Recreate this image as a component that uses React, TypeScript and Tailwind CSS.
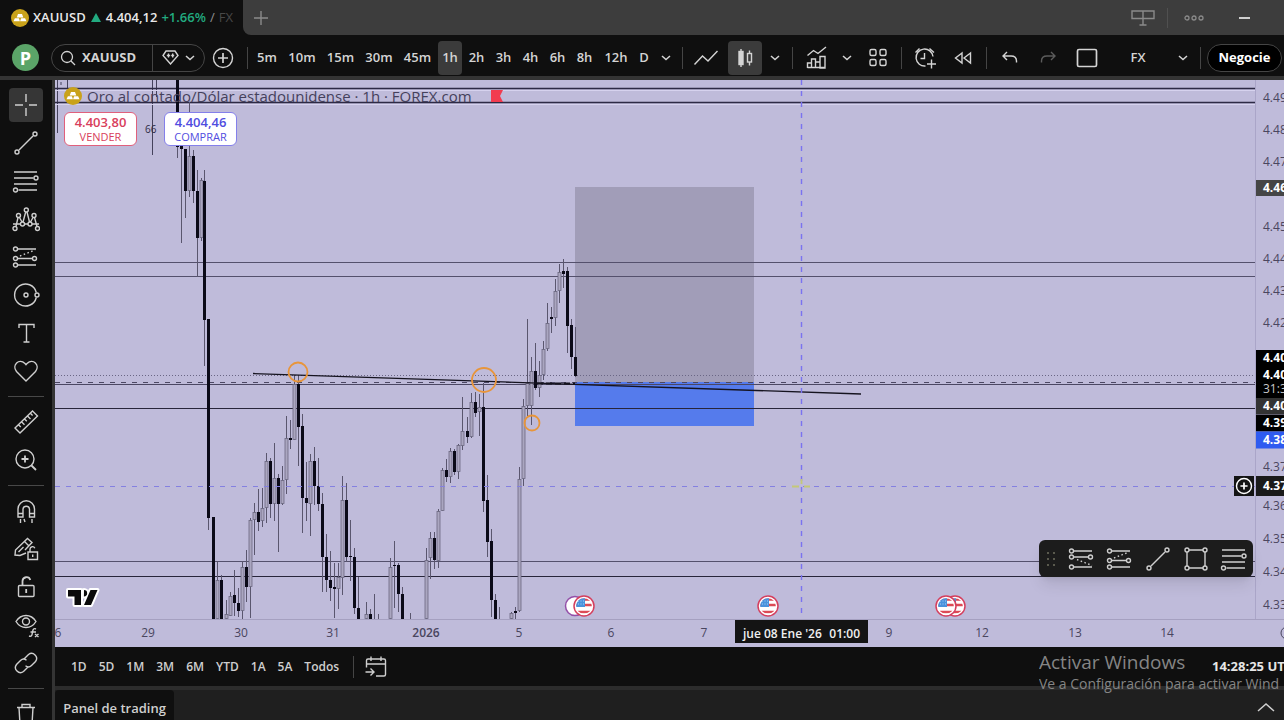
import React from 'react';
import clsx from 'clsx';

type Candle = [x: number, high: number, top: number, bottom: number, low: number, filled: 0 | 1];

const candles: Candle[] = [
  [177, 80, 80, 147, 158, 1],
  [181, 140, 146, 149, 243, 1],
  [185, 149, 149, 191, 218, 1],
  [189, 102, 156, 191, 197, 0],
  [193, 150, 156, 191, 203, 1],
  [197, 170, 191, 238, 277, 1],
  [201, 178, 180, 238, 241, 0],
  [204, 170, 181, 320, 366, 1],
  [208, 319, 319, 518, 530, 1],
  [213, 517, 517, 619, 619, 1],
  [217, 562, 580, 619, 619, 0],
  [221, 575, 580, 619, 619, 1],
  [226, 600, 614, 619, 619, 0],
  [230, 592, 596, 616, 616, 0],
  [234, 570, 595, 603, 616, 1],
  [238, 588, 603, 611, 617, 1],
  [242, 561, 567, 611, 619, 0],
  [246, 550, 567, 587, 602, 1],
  [250, 518, 520, 587, 618, 0],
  [254, 503, 512, 520, 555, 0],
  [258, 489, 512, 522, 531, 1],
  [262, 488, 508, 521, 527, 0],
  [266, 453, 461, 508, 523, 0],
  [270, 458, 461, 504, 518, 1],
  [274, 443, 478, 504, 521, 0],
  [278, 474, 478, 504, 552, 1],
  [282, 466, 480, 504, 505, 0],
  [286, 416, 438, 480, 494, 0],
  [290, 420, 438, 440, 449, 1],
  [294, 375, 384, 440, 440, 0],
  [298, 375, 384, 427, 466, 1],
  [302, 414, 426, 498, 533, 1],
  [306, 462, 498, 503, 521, 1],
  [310, 454, 461, 504, 536, 0],
  [314, 447, 461, 486, 505, 1],
  [318, 458, 486, 504, 511, 1],
  [322, 493, 504, 557, 592, 1],
  [326, 534, 557, 580, 592, 1],
  [330, 551, 580, 588, 601, 1],
  [334, 563, 587, 589, 618, 1],
  [338, 563, 577, 589, 609, 0],
  [342, 476, 500, 578, 595, 0],
  [346, 483, 500, 557, 562, 1],
  [350, 520, 556, 557, 581, 1],
  [354, 548, 557, 608, 614, 1],
  [358, 577, 608, 619, 619, 1],
  [366, 602, 614, 619, 619, 0],
  [370, 609, 614, 619, 619, 1],
  [374, 594, 619, 619, 619, 1],
  [378, 614, 619, 619, 619, 1],
  [390, 558, 567, 619, 619, 0],
  [394, 541, 565, 566, 608, 1],
  [398, 563, 565, 594, 612, 1],
  [402, 587, 594, 619, 619, 1],
  [410, 613, 619, 619, 619, 1],
  [426, 548, 560, 619, 619, 0],
  [430, 532, 538, 558, 579, 0],
  [434, 532, 538, 560, 569, 1],
  [438, 509, 511, 561, 568, 0],
  [442, 468, 470, 511, 511, 0],
  [446, 459, 470, 477, 482, 1],
  [450, 448, 451, 477, 483, 0],
  [454, 449, 451, 472, 475, 1],
  [458, 444, 445, 472, 479, 0],
  [462, 397, 431, 446, 450, 0],
  [467, 417, 431, 437, 443, 1],
  [471, 393, 402, 437, 438, 0],
  [475, 392, 402, 413, 417, 1],
  [479, 394, 407, 412, 436, 0],
  [483, 383, 407, 501, 512, 1],
  [487, 475, 500, 542, 557, 1],
  [491, 529, 541, 600, 617, 1],
  [495, 594, 600, 619, 619, 1],
  [499, 607, 619, 619, 619, 1],
  [511, 612, 613, 619, 619, 0],
  [515, 607, 611, 613, 619, 1],
  [519, 467, 479, 611, 612, 0],
  [523, 399, 406, 479, 486, 0],
  [527, 319, 383, 406, 416, 0],
  [531, 357, 371, 406, 425, 0],
  [535, 343, 371, 388, 390, 1],
  [539, 361, 375, 388, 397, 0],
  [543, 341, 349, 375, 380, 0],
  [547, 303, 323, 349, 351, 0],
  [551, 307, 317, 319, 333, 1],
  [555, 279, 291, 318, 326, 0],
  [559, 264, 272, 291, 303, 0],
  [563, 259, 271, 274, 288, 1],
  [567, 267, 271, 326, 353, 1],
  [571, 319, 325, 357, 369, 1],
  [575, 327, 357, 376, 377, 1],
];

// y position and colour of every horizontal level
const levels = [
  { y: 88, color: '#2d2a45', width: 1.4 },
  { y: 102, color: '#2d2a45', width: 1.4 },
  { y: 262, color: '#54506c', width: 1 },
  { y: 276, color: '#54506c', width: 1 },
  { y: 384, color: '#4b4763', width: 1 },
  { y: 408, color: '#28253a', width: 1 },
  { y: 561, color: '#54506c', width: 1 },
  { y: 576, color: '#28253a', width: 1.2 },
];

const prices = [
  { y: 97, label: '4.49' },
  { y: 129, label: '4.48' },
  { y: 161, label: '4.47' },
  { y: 226, label: '4.45' },
  { y: 258, label: '4.44' },
  { y: 290, label: '4.43' },
  { y: 322, label: '4.42' },
  { y: 466, label: '4.37' },
  { y: 505, label: '4.36' },
  { y: 538, label: '4.35' },
  { y: 571, label: '4.34' },
  { y: 604, label: '4.33' },
];

const priceTags = [
  { y: 188, height: 16, bg: '#454545', label: '4.46' },
  { y: 358, height: 16, bg: '#000000', label: '4.40' },
  { y: 382, height: 32, bg: '#000000', label: '4.40', sub: '31:3' },
  { y: 406, height: 16, bg: '#333333', label: '4.40' },
  { y: 423, height: 17, bg: '#000000', label: '4.39' },
  { y: 440, height: 17, bg: '#2f5bf0', label: '4.38' },
  { y: 486, height: 20, bg: '#1a1a1a', label: '4.37' },
];

const days = [
  { x: 58, label: '6' },
  { x: 148, label: '29' },
  { x: 241, label: '30' },
  { x: 333, label: '31' },
  { x: 426, label: '2026', strong: true },
  { x: 519, label: '5' },
  { x: 611, label: '6' },
  { x: 704, label: '7' },
  { x: 889, label: '9' },
  { x: 982, label: '12' },
  { x: 1075, label: '13' },
  { x: 1167, label: '14' },
];

const intervals = [
  { label: '5m', width: 'w-8' },
  { label: '10m', width: 'w-[38px]' },
  { label: '15m', width: 'w-[39px]' },
  { label: '30m', width: 'w-[38px]' },
  { label: '45m', width: 'w-[39px]' },
  { label: '1h', width: 'w-6', active: true },
  { label: '2h', width: 'w-[27px]' },
  { label: '3h', width: 'w-[27px]' },
  { label: '4h', width: 'w-[27px]' },
  { label: '6h', width: 'w-[27px]' },
  { label: '8h', width: 'w-[27px]' },
  { label: '12h', width: 'w-9' },
  { label: 'D', width: 'w-5' },
];

const ranges = ['1D', '5D', '1M', '3M', '6M', 'YTD', '1A', '5A', 'Todos'];

interface IconProps {
  children: React.ReactNode;
  size?: number;
  stroke?: number;
}

const Icon: React.FC<IconProps> = ({ children, size = 28, stroke = 1.4 }) => (
  <svg
    width={size}
    height={size}
    viewBox="0 0 28 28"
    fill="none"
    stroke="currentColor"
    strokeWidth={stroke}
    className="shrink-0"
    aria-hidden="true"
  >
    {children}
  </svg>
);

const Chevron = () => (
  <svg width="10" height="10" viewBox="0 0 10 10" fill="none" stroke="currentColor" strokeWidth="1.5" aria-hidden="true">
    <path d="M1 3l4 3.6L9 3" />
  </svg>
);

const TrendIcon = () => (
  <Icon>
    <path d="M7 21L21 7" />
    <circle cx="5" cy="23" r="2" />
    <circle cx="23" cy="5" r="2" />
  </Icon>
);

const FibIcon = () => (
  <Icon>
    <path d="M2 5h23M2 11h19.5M2 17h23M6.500 23H25" />
    <circle cx="24" cy="11" r="2" />
    <circle cx="3.500" cy="23" r="2" />
  </Icon>
);

const ForecastIcon = () => (
  <Icon>
    <path d="M5.500 6H24M6 15.500h14M5.500 22H24" />
    <circle cx="3.500" cy="6" r="2" />
    <circle cx="3.500" cy="15.500" r="2" />
    <circle cx="22.500" cy="15.500" r="2" />
    <circle cx="3.500" cy="22" r="2" />
    <path d="M8 13l15-6" strokeDasharray="1.500 2.500" />
  </Icon>
);

const ShortIcon = () => (
  <Icon>
    <path d="M5.500 6H24M6 12h14M5.500 22H24" />
    <circle cx="3.500" cy="6" r="2" />
    <circle cx="3.500" cy="12" r="2" />
    <circle cx="22.500" cy="12" r="2" />
    <circle cx="3.500" cy="22" r="2" />
    <path d="M9 14.500l15 6" strokeDasharray="1.500 2.500" />
  </Icon>
);

const RectIcon = () => (
  <Icon>
    <path d="M7 5h14M7 23h14M5 7v14M23 7v14" />
    <circle cx="5" cy="5" r="2" />
    <circle cx="23" cy="5" r="2" />
    <circle cx="5" cy="23" r="2" />
    <circle cx="23" cy="23" r="2" />
  </Icon>
);

const GoldLogo = () => (
  <svg width="18" height="18" viewBox="0 0 18 18" className="shrink-0" aria-hidden="true">
    <circle cx="9" cy="9" r="9" fill="#c9a21a" />
    <path d="M7 5h4l1.300 3.500H5.700zM3.900 9.300h4l1 3H2.500zM10.100 9.300h4l1.400 3H9.100z" fill="#fff" />
  </svg>
);

const drawingTools = [
  [
    {
      name: 'Cruz',
      active: true,
      icon: (
        <Icon>
          <path d="M14 3v8M14 17v8M3 14h8M17 14h8" />
        </Icon>
      ),
    },
    { name: 'Línea de tendencia', icon: <TrendIcon /> },
    { name: 'Retroceso de Fibonacci', icon: <FibIcon /> },
    {
      name: 'Patrón XABCD',
      icon: (
        <Icon>
          <path d="M1 19h7.500M12.500 19H16M20 19h7M4 21.500L6 12.500M7.500 12.500l2.500 4.500M11 17l2.700-10M15 7l2.500 10M18.500 17l2.500-4.500M22.500 12.500l2.500 9" />
          <circle cx="14.300" cy="5" r="2" />
          <circle cx="6.500" cy="10.500" r="2" />
          <circle cx="22" cy="10.500" r="2" />
          <circle cx="10.500" cy="19" r="2" />
          <circle cx="18" cy="19" r="2" />
          <circle cx="3" cy="23.500" r="2" />
          <circle cx="25.500" cy="23.500" r="2" />
        </Icon>
      ),
    },
    { name: 'Previsión', icon: <ForecastIcon /> },
    {
      name: 'Formas',
      icon: (
        <Icon>
          <path d="M24.300 11.500a11 11 0 1 0 0 5" />
          <circle cx="14" cy="14" r="2" />
          <circle cx="25" cy="14" r="2" />
        </Icon>
      ),
    },
    {
      name: 'Texto',
      icon: (
        <Icon>
          <path d="M7 9V5.500h15V9M14.500 5.500V23M11.500 23h6" />
        </Icon>
      ),
    },
    {
      name: 'Iconos',
      icon: (
        <Icon>
          <path d="M14 24L4.500 14.500C-.5 8 7 1 13 6.500l1 1.200 1-1.200C21 1 28.500 8 23.500 14.500z" />
        </Icon>
      ),
    },
  ],
  [
    {
      name: 'Medir',
      icon: (
        <Icon>
          <path d="M3 20L20.500 3 25.500 8 8 25zM6.500 16.800l2.300 2.300M9.500 13.800l3 3M12.500 10.900l2.300 2.300M15.500 8l3 3M18.400 5.200l2.200 2.200" />
        </Icon>
      ),
    },
    {
      name: 'Acercar',
      icon: (
        <Icon>
          <circle cx="13" cy="13" r="9" />
          <path d="M13 9.500v7M9.500 13h7M19.500 19.500l4.500 4.500" strokeWidth="1.800" />
        </Icon>
      ),
    },
  ],
  [
    {
      name: 'Imán',
      icon: (
        <Icon>
          <path d="M6 20v-8a8 8 0 0 1 16.500 0v8h-5v-8a3.300 3.300 0 0 0-6.500 0v8zM6 16.500h5M17.500 16.500h5M8.500 22v4M20 22v4M12 22l1 3" />
        </Icon>
      ),
    },
    {
      name: 'Modo de dibujo',
      icon: (
        <Icon>
          <path d="M14 18l-6 2.500-5-.500.500-5L15.500 3.500l4.500 4-7 7.500M12.500 6.500l4 4M6.500 17l5-5" />
          <path d="M16 17h9.500v7.500H16zM18 16.500v-2.500a2.500 2.500 0 0 1 4.800-.800M20.700 19.500v2.500" />
        </Icon>
      ),
    },
    {
      name: 'Bloquear dibujos',
      icon: (
        <Icon>
          <rect x="6.500" y="12.500" width="15.500" height="11" rx="1" />
          <path d="M10.500 12V8a4 4 0 0 1 7.800-1M14.200 16v4" strokeWidth="1.800" />
        </Icon>
      ),
    },
    {
      name: 'Ocultar dibujos',
      icon: (
        <Icon>
          <path d="M4 10.500C9 2.500 19 2.500 24 10.500 19 18.500 9 18.500 4 10.500z" />
          <circle cx="14" cy="10.500" r="3.500" />
          <path d="M17 25c3 1 3-1 3.500-4 .4-3 1.500-4 3.500-3M18.500 21H24M23 23l3.500 3M26.500 23L23 26" />
        </Icon>
      ),
    },
    {
      name: 'Vincular',
      icon: (
        <Icon>
          <path d="M12 10l4.500-4.500a5 5 0 0 1 7 7L19.500 16.500a4.500 4.500 0 0 1-6 .3M16 18l-4.500 4.500a5 5 0 0 1-7-7L8.500 11.500a4.500 4.500 0 0 1 6-.3" />
        </Icon>
      ),
    },
  ],
  [
    {
      name: 'Eliminar',
      icon: (
        <Icon>
          <path d="M5 7.500h18M10 7V4.500h8V7M7 7.500l1 17h12l1-17" />
        </Icon>
      ),
    },
  ],
];

const Divider = () => <div className="h-[22px] w-px shrink-0 bg-[#454545]" />;

interface IconButtonProps {
  label: string;
  className?: string;
  children: React.ReactNode;
}

const IconButton: React.FC<IconButtonProps> = ({ label, className, children }) => (
  <button type="button" aria-label={label} className={clsx('flex h-[34px] shrink-0 items-center justify-center', className)}>
    {children}
  </button>
);

const WindowBar = () => (
  <header className="flex h-[35px] shrink-0 items-stretch bg-[#0f0f0f]">
    <div className="flex w-[243px] shrink-0 items-center gap-1 overflow-hidden pl-[11px] text-[13px] font-semibold whitespace-nowrap text-[#e8e8e8]">
      <GoldLogo />
      <span>XAUUSD</span>
      <svg width="10" height="9" viewBox="0 0 10 9" className="mx-px shrink-0" aria-hidden="true">
        <path d="M5 0l5 9H0z" fill="#22ab80" />
      </svg>
      <span>4.404,12</span>
      <span className="text-[#22ab80]">+1.66%</span>
      <span className="font-normal text-[#909090]">/</span>
      <span className="font-normal text-[#484848]">FX</span>
    </div>
    <div className="flex flex-1 items-center rounded-bl-lg bg-[#3d3d3d] text-[#8a8a8a]">
      <IconButton label="Nueva pestaña" className="ml-1 w-7">
        <svg width="14" height="14" viewBox="0 0 14 14" stroke="currentColor" strokeWidth="1.400" aria-hidden="true">
          <path d="M7 0v14M0 7h14" />
        </svg>
      </IconButton>
      <div className="flex-1" />
      <IconButton label="Diseño" className="w-10">
        <svg width="24" height="18" viewBox="0 0 24 18" fill="none" stroke="currentColor" strokeWidth="1.400" aria-hidden="true">
          <path d="M1 2h22v7.500H1zM12 2v14M8.500 16h7" />
        </svg>
      </IconButton>
      <div className="mx-1 h-5 w-px bg-[#505050]" />
      <IconButton label="Más" className="w-11">
        <svg width="20" height="6" viewBox="0 0 20 6" fill="none" stroke="currentColor" strokeWidth="1.300" aria-hidden="true">
          <circle cx="3" cy="3" r="2" />
          <circle cx="10" cy="3" r="2" />
          <circle cx="17" cy="3" r="2" />
        </svg>
      </IconButton>
      <IconButton label="Minimizar" className="mr-5 ml-2 w-10 text-[#e0e0e0]">
        <svg width="11" height="2" viewBox="0 0 11 2" aria-hidden="true">
          <path d="M0 1h11" stroke="currentColor" strokeWidth="1.800" />
        </svg>
      </IconButton>
    </div>
  </header>
);

const TopToolbar = () => (
  <div className="flex h-[45px] shrink-0 items-center border-b-4 border-[#343434] bg-[#0f0f0f] pt-1 pl-3 text-[13px] font-semibold text-[#d4d4d4]">
    <button type="button" className="flex size-[27px] shrink-0 items-center justify-center rounded-full bg-[#5ba468] text-lg leading-none font-bold text-white">
      P
    </button>
    <div className="ml-3 flex h-7 w-[154px] shrink-0 items-stretch rounded-full border border-[#454545]">
      <button type="button" className="flex w-[101px] items-center gap-1.5 border-r border-[#454545] pl-2 text-[13px] font-bold">
        <svg width="16" height="16" viewBox="0 0 16 16" fill="none" stroke="currentColor" strokeWidth="1.300" aria-hidden="true">
          <circle cx="7" cy="7" r="5.500" />
          <path d="M11 11l4 4" />
        </svg>
        XAUUSD
      </button>
      <button type="button" aria-label="Tipo de símbolo" className="flex flex-1 items-center justify-center gap-1.5">
        <svg width="17" height="15" viewBox="0 0 17 15" fill="none" stroke="currentColor" strokeWidth="1.400" aria-hidden="true">
          <path d="M4 1h9l3 4.500L8.500 14 1 5.500z" />
          <path d="M6.500 3.500v4M4.800 5.500h3.400M10.700 3.500v4M9.200 5.500h3" />
        </svg>
        <Chevron />
      </button>
    </div>
    <IconButton label="Comparar" className="mx-1 w-7">
      <Icon>
        <circle cx="14" cy="14" r="9.500" />
        <path d="M14 9v10M9 14h10" strokeWidth="1.700" />
      </Icon>
    </IconButton>
    <div className="ml-1.5">
      <Divider />
    </div>
    <div className="ml-[3px] flex">
      {intervals.map((item) => (
        <button
          key={item.label}
          type="button"
          className={clsx('h-[34px] shrink-0 rounded', item.width, item.active && 'mx-px bg-[#3b3b3b]')}
        >
          {item.label}
        </button>
      ))}
    </div>
    <IconButton label="Más intervalos" className="mr-1 w-6">
      <Chevron />
    </IconButton>
    <Divider />
    <IconButton label="Líneas" className="w-[45px]">
      <Icon>
        <path d="M2.500 20.500l8-8.500 5.500 5L25.500 7" />
      </Icon>
    </IconButton>
    <IconButton label="Velas" className="w-[34px] rounded bg-[#3b3b3b]">
      <Icon>
        <path d="M10 5v18M18.500 6.500v15" />
        <rect x="8" y="7.500" width="4" height="13" fill="currentColor" />
        <rect x="16.500" y="9.500" width="4" height="8.500" fill="#3b3b3b" />
      </Icon>
    </IconButton>
    <IconButton label="Tipos de gráfico" className="mr-1 w-[26px]">
      <Chevron />
    </IconButton>
    <Divider />
    <IconButton label="Indicadores" className="ml-2 w-8">
      <Icon>
        <path d="M4.500 24v-5h4v5M8.500 24v-9h4v9M12.500 24v-6h4.500v6M17 24V12.500h5V24zM4.500 23.500h17.500M4.500 11.500l6-5 4.500 3 8-6.500" />
      </Icon>
    </IconButton>
    <IconButton label="Plantillas de indicadores" className="w-7">
      <Chevron />
    </IconButton>
    <IconButton label="Diseños" className="w-[34px]">
      <Icon>
        <rect x="6" y="5.500" width="6" height="6" rx="1.500" />
        <rect x="16" y="5.500" width="6" height="6" rx="1.500" />
        <rect x="6" y="15.500" width="6" height="6" rx="1.500" />
        <rect x="16" y="15.500" width="6" height="6" rx="1.500" />
      </Icon>
    </IconButton>
    <div className="ml-1.5">
      <Divider />
    </div>
    <IconButton label="Alerta" className="ml-1 w-[38px]">
      <Icon>
        <path d="M22 12.500A8.500 8.500 0 1 0 14.500 22M13.500 9v5.500h-4M4.500 8.500L8.500 4.500M18.500 4.500l4.500 4M20.500 15.500v9M16 20h9" />
      </Icon>
    </IconButton>
    <IconButton label="Repetición" className="w-[38px]">
      <Icon>
        <path d="M13 9l-6.500 5L13 19zM21.500 9L15 14l6.500 5z" />
      </Icon>
    </IconButton>
    <div className="ml-1">
      <Divider />
    </div>
    <IconButton label="Deshacer" className="ml-1 w-[38px]">
      <Icon>
        <path d="M11 8l-4 4 4 4M7.500 12H15c3.500 0 5.500 2 5.500 5v1.500" />
      </Icon>
    </IconButton>
    <IconButton label="Rehacer" className="w-[38px] text-[#5c5c5c]">
      <Icon>
        <path d="M17 8l4 4-4 4M20.500 12H13c-3.500 0-5.500 2-5.500 5v1.500" />
      </Icon>
    </IconButton>
    <IconButton label="Pantalla completa" className="w-10">
      <Icon>
        <rect x="4.500" y="5.500" width="19" height="17" rx="1.500" strokeWidth="1.700" />
      </Icon>
    </IconButton>
    <div className="flex-1" />
    <button type="button" className="h-[34px] w-12">
      FX
    </button>
    <IconButton label="Guardar como" className="ml-1 w-[34px]">
      <Chevron />
    </IconButton>
    <Divider />
    <button type="button" className="mr-0.5 ml-1.5 h-7 w-[75px] shrink-0 rounded-full border border-[#454545] bg-black text-[13px] font-bold text-white">
      Negocie
    </button>
  </div>
);

const Sidebar = () => (
  <nav aria-label="Herramientas de dibujo" className="flex w-[55px] shrink-0 flex-col overflow-hidden border-r-[3px] border-[#343434] bg-[#0f0f0f] pt-1.5 text-[#cfcfcf]">
    {drawingTools.map((group, index) => (
      <React.Fragment key={index}>
        {index > 0 && <div className="mx-2 my-1.5 h-px shrink-0 bg-[#484848]" />}
        {group.map((tool) => (
          <div key={tool.name} className="flex h-[38px] shrink-0 items-center justify-center">
            <IconButton label={tool.name} className={clsx('w-[34px] rounded', 'active' in tool && tool.active && 'bg-[#363636]')}>
              {tool.icon}
            </IconButton>
          </div>
        ))}
      </React.Fragment>
    ))}
  </nav>
);

const FlagEvent: React.FC<{ x: number }> = ({ x }) => (
  <g transform={`translate(${x} 606)`}>
    <circle r="10" fill="#fff" stroke="#d43f5e" strokeWidth="1.500" />
    <g clipPath="url(#flag)">
      <rect x="-8" y="-8" width="16" height="16" fill="#fff" />
      <path d="M-8-6.500H8M-8-1H8M-8 6H8" stroke="#dc4a55" strokeWidth="2.600" />
      <rect x="-8" y="-8" width="9" height="9" fill="#4a92dc" />
      <path d="M-6-5h6M-6-2h6" stroke="#a9d0f5" strokeDasharray="1 1.500" />
    </g>
  </g>
);

const PriceChart = () => (
  <svg className="block h-[539px] w-full bg-[#bfbbda]" role="img" aria-label="Gráfico de velas XAUUSD">
    <defs>
      <clipPath id="flag">
        <circle r="7.800" />
      </clipPath>
    </defs>
    <g transform="translate(-55 -80)">
      <path d="M57.500 80v53M67.500 80v9M61 82v3M152.500 80v75M156.500 80v17" stroke="#45425c" />
      <rect x="575" y="187" width="179" height="195" fill="#a19db8" />
      <rect x="575" y="382" width="179" height="44" fill="#557bec" />
      <path d="M55 90.500h3000M55 104.500h3000" stroke="#d6d2ee" />
      {levels.map((level) => (
        <path key={level.y} d={`M55 ${level.y + 0.5}h3000`} stroke={level.color} strokeWidth={level.width} />
      ))}
      <path d="M55 375.500h3000" stroke="#6a6685" strokeDasharray="1 2" />
      <path d="M55 382.500h3000" stroke="#4b4763" strokeDasharray="5 6" />
      {candles.map(([x, high, top, bottom, low, filled]) => (
        <g key={x}>
          <line x1={x + 0.5} x2={x + 0.5} y1={high} y2={low} stroke="#5a566e" />
          {filled ? (
            <rect x={x - 1} y={top} width="3" height={bottom - top} fill="#0b0a18" />
          ) : (
            <rect x={x - 1} y={top + 0.5} width="3" height={bottom - top - 1} fill="#aaa6c0" stroke="#6b6880" strokeWidth="0.800" />
          )}
        </g>
      ))}
      <path d="M253 373.500L861 394" stroke="#15131f" strokeWidth="1.300" />
      <path d="M537 383.500h38" stroke="#15131f" strokeWidth="2" strokeDasharray="6 3" />
      <g fill="none" stroke="#e8953a" strokeWidth="1.800">
        <circle cx="298" cy="372" r="9.500" />
        <circle cx="484" cy="380" r="12" />
        <circle cx="532" cy="423" r="7.500" />
      </g>
      <path d="M55 486.500h3000" stroke="#8480e0" strokeDasharray="5 6" />
      <path d="M801.500 80v539" stroke="#7a72f0" strokeWidth="1.400" strokeDasharray="5 6" />
      <path d="M792 486.500h7M804 486.500h6M801.500 479v5" stroke="#c4c878" strokeWidth="1.800" />
      <text x="145" y="133" fontSize="10" fill="#2d2a45">66</text>
      <circle cx="575" cy="606" r="9.500" fill="#fff" stroke="#9450a8" strokeWidth="1.500" />
      <FlagEvent x={584} />
      <FlagEvent x={768} />
      <FlagEvent x={955} />
      <FlagEvent x={946} />
      <path
        d="M68 590h13v15h-6.500v-8.500H68zM84 590a3.200 3.200 0 1 1-.1 6.400zM90.500 590h7l-6.500 15h-7z"
        fill="#0a0a0a"
        stroke="#fff"
        strokeWidth="4"
        strokeLinejoin="round"
        paintOrder="stroke"
      />
    </g>
  </svg>
);

const PriceScale = () => (
  <svg className="block h-[539px] w-[29px] shrink-0 border-l border-[#aaa5c8] bg-[#bfbbda]" role="img" aria-label="Escala de precios">
    <g transform="translate(0 -80)" fontSize="12">
      {prices.map((price) => (
        <text key={price.y} x="7" y={price.y + 5} fill="#4a465f">
          {price.label}
        </text>
      ))}
      {priceTags.map((tag) => (
        <g key={tag.y} fill="#fff">
          <rect x="0" y={tag.y - tag.height / 2} width="29" height={tag.height} fill={tag.bg} />
          <text x="7" y={tag.sub ? tag.y - 3 : tag.y + 4} fontWeight="700">
            {tag.label}
          </text>
          {tag.sub && (
            <text x="7" y={tag.y + 11} fill="#c8c8c8">
              {tag.sub}
            </text>
          )}
        </g>
      ))}
    </g>
  </svg>
);

const TimeScale = () => (
  <svg className="block h-7 w-full border-t border-[#a5a0c0] bg-[#bfbbda]" role="img" aria-label="Escala de tiempo">
    <g transform="translate(-55 0)" fontSize="12" textAnchor="middle" fill="#4a465f">
      {days.map((day) => (
        <text key={day.x} x={day.x} y="17" fontWeight={day.strong ? 600 : 400}>
          {day.label}
        </text>
      ))}
      <rect x="735" y="0" width="133" height="23" fill="#141414" />
      <text x="743" y="18" textAnchor="start" fontWeight="600" fill="#f0f0f0">
        jue 08 Ene '26
      </text>
      <text x="860" y="18" textAnchor="end" fontWeight="600" fill="#f0f0f0">
        01:00
      </text>
      <circle cx="1287" cy="13" r="6" fill="none" stroke="#4a465f" />
    </g>
  </svg>
);

const Legend = () => (
  <div className="absolute top-[5px] left-[9px] flex flex-col gap-[5px]">
    <div className="flex items-center gap-[5px] text-[15px] leading-[22px] whitespace-nowrap text-[#45415c]">
      <GoldLogo />
      <h1>Oro al contado/Dólar estadounidense · 1h · FOREX.com</h1>
      <svg width="12" height="12" viewBox="0 0 12 12" className="ml-3.5" aria-hidden="true">
        <path d="M0 0h12L9 6l3 6H0z" fill="#f23b50" />
      </svg>
    </div>
    <div className="flex gap-[27px] text-center">
      <button type="button" className="flex h-[34px] w-[73px] flex-col items-center justify-center rounded-md border border-[#e0607c] bg-white text-[#d8405c]">
        <span className="text-[13px] leading-4 font-semibold">4.403,80</span>
        <span className="text-[11px] leading-[14px]">VENDER</span>
      </button>
      <button type="button" className="flex h-[34px] w-[73px] flex-col items-center justify-center rounded-md border border-[#8480ea] bg-white text-[#514de0]">
        <span className="text-[13px] leading-4 font-semibold">4.404,46</span>
        <span className="text-[11px] leading-[14px]">COMPRAR</span>
      </button>
    </div>
  </div>
);

const FavoritesBar = () => (
  <div className="absolute right-0.5 bottom-[42px] flex h-[37px] w-[214px] items-center rounded-md bg-[#1c1c1c] pl-2 text-[#cfcfcf] shadow-lg">
    <svg width="8" height="14" viewBox="0 0 8 14" fill="#5a5a4e" aria-hidden="true">
      <path d="M0 0h2v2H0zM6 0h2v2H6zM0 6h2v2H0zM6 6h2v2H6zM0 12h2v2H0zM6 12h2v2H6z" />
    </svg>
    <div className="ml-2 flex flex-1 justify-between">
      <IconButton label="Posición corta" className="w-[38px]">
        <ShortIcon />
      </IconButton>
      <IconButton label="Posición larga" className="w-[38px]">
        <ForecastIcon />
      </IconButton>
      <IconButton label="Línea de tendencia favorita" className="w-[38px]">
        <TrendIcon />
      </IconButton>
      <IconButton label="Rectángulo" className="w-[38px]">
        <RectIcon />
      </IconButton>
      <IconButton label="Fibonacci favorito" className="w-[38px]">
        <FibIcon />
      </IconButton>
    </div>
  </div>
);

const ChartArea = () => (
  <main className="flex shrink-0 flex-col">
    <div className="flex">
      <div className="relative min-w-0 flex-1">
        <PriceChart />
        <Legend />
        <button type="button" aria-label="Añadir alerta" className="absolute top-[396px] right-px flex size-5 items-center justify-center bg-[#141414] text-white">
          <Icon size={20}>
            <circle cx="14" cy="14" r="10.500" strokeWidth="2" />
            <path d="M14 9v10M9 14h10" strokeWidth="2.400" />
          </Icon>
        </button>
        <FavoritesBar />
      </div>
      <PriceScale />
    </div>
    <TimeScale />
  </main>
);

const RangeBar = () => (
  <div className="flex h-[39px] shrink-0 items-center bg-[#0f0f0f] pl-2.5 text-xs font-semibold text-[#cfcfcf]">
    {ranges.map((range) => (
      <button key={range} type="button" className="h-7 px-1.5">
        {range}
      </button>
    ))}
    <div className="mx-2">
      <Divider />
    </div>
    <IconButton label="Ir a la fecha" className="w-7">
      <Icon>
        <path d="M4.500 14.500V7.500a1.500 1.500 0 0 1 1.500-1.500h16a1.500 1.500 0 0 1 1.500 1.500V21.500a1.500 1.500 0 0 1-1.500 1.500H14M4.500 11h19M9 3.500V8M19 3.500V8M3.500 19H12M8.500 15.500l3.500 3.500-3.500 3.500" />
      </Icon>
    </IconButton>
    <div className="flex-1" />
    <button type="button" className="w-[72px] shrink-0 overflow-hidden text-left text-[13px] font-bold whitespace-nowrap text-[#e6e6e6]">
      14:28:25 UT
    </button>
  </div>
);

const TradingPanel = () => (
  <div className="flex min-h-[34px] flex-1 items-stretch border-t-4 border-[#2c2c2c] bg-[#1f1f1f] text-[#cfcfcf]">
    <button type="button" className="w-[119px] shrink-0 rounded-t bg-[#0f0f0f] pt-2 text-[13px] font-semibold">
      Panel de trading
    </button>
    <div className="flex-1" />
    <IconButton label="Abrir panel" className="mr-1 w-7">
      <svg width="18" height="10" viewBox="0 0 18 10" fill="none" stroke="currentColor" strokeWidth="1.500" aria-hidden="true">
        <path d="M1 9l8-7 8 7" />
      </svg>
    </IconButton>
  </div>
);

const App: React.FC = () => {
  return (
    <div className="relative flex h-screen flex-col overflow-hidden bg-[#0f0f0f] font-['Open_Sans','Noto_Sans',sans-serif]">
      <WindowBar />
      <TopToolbar />
      <div className="flex min-h-0 flex-1">
        <Sidebar />
        <div className="flex min-w-0 flex-1 flex-col">
          <ChartArea />
          <RangeBar />
          <TradingPanel />
        </div>
      </div>
      <div className="pointer-events-none absolute right-0 bottom-[26px] w-[245px] overflow-hidden whitespace-nowrap text-[#858585]">
        <p className="text-[19px] leading-6">Activar Windows</p>
        <p className="text-sm leading-5">Ve a Configuración para activar Wind</p>
      </div>
    </div>
  );
};

export default App;
